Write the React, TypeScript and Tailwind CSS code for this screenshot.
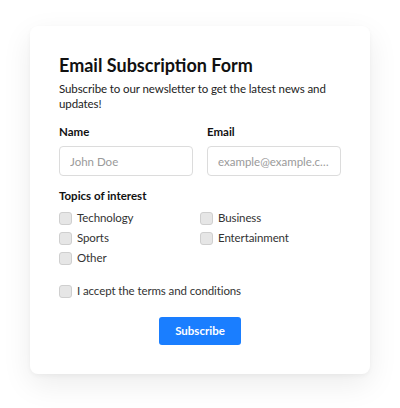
import React from "react";

const Box = () => (
  <span className="inline-block h-[13px] w-[13px] shrink-0 rounded-[3px] border border-[#cfcfcf] bg-[#e6e6e6]" />
);

const Check = ({ label }: { label: string }) => (
  <label className="flex h-[20px] items-center gap-[5px] text-[11.5px] tracking-[-0.1px] text-[#333]">
    <Box />
    <span>{label}</span>
  </label>
);

export default function App() {
  return (
    <div
      className="flex min-h-[408px] items-start justify-center bg-white pt-[26px]"
      style={{ fontFamily: 'Lato, "Noto Sans", sans-serif' }}
    >
      <div className="w-[340px] rounded-[8px] bg-white p-[29px] shadow-[0_2px_4px_rgba(0,0,0,0.04),0_10px_30px_rgba(0,0,0,0.08)]">
        <h1 className="text-[18px] font-bold leading-[20px] text-[#111]">Email Subscription Form</h1>
        <p className="mt-[6px] text-[11.5px] leading-[15px] tracking-[-0.1px] text-[#222]">
          Subscribe to our newsletter to get the latest news and updates!
        </p>
        <div className="mt-[14px] grid grid-cols-2 gap-[14px]">
          <div className="flex flex-col gap-[7px]">
            <span className="text-[11.5px] font-bold leading-[14px] text-[#111]">Name</span>
            <input
              placeholder="John Doe"
              className="h-[30px] w-full rounded-[4px] border border-[#dcdcdc] px-[10px] text-[11.5px] text-[#333] outline-none placeholder:text-[#9a9a9a]"
            />
          </div>
          <div className="flex flex-col gap-[7px]">
            <span className="text-[11.5px] font-bold leading-[14px] text-[#111]">Email</span>
            <input
              placeholder="example@example.com"
              className="h-[30px] w-full rounded-[4px] border border-[#dcdcdc] px-[10px] text-[11.5px] text-[#333] outline-none placeholder:text-[#9a9a9a] text-ellipsis"
            />
          </div>
        </div>
        <div className="mt-[13px] text-[11.5px] font-bold leading-[14px] text-[#111]">Topics of interest</div>
        <div className="mt-[5px] grid grid-cols-2">
          <Check label="Technology" />
          <Check label="Business" />
          <Check label="Sports" />
          <Check label="Entertainment" />
          <Check label="Other" />
        </div>
        <div className="mt-[13px]">
          <Check label="I accept the terms and conditions" />
        </div>
        <div className="mt-[16px] flex justify-center">
          <button className="h-[28px] w-[82px] rounded-[3px] bg-[#1a7eff] text-[11.5px] font-bold text-white">
            Subscribe
          </button>
        </div>
      </div>
    </div>
  );
}
